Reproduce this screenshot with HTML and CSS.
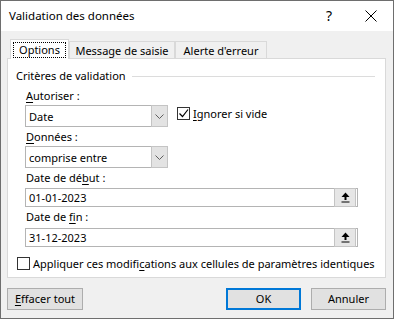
FILE: index.html
```html
<!DOCTYPE html>
<html lang="fr">
<head>
  <meta charset="UTF-8">
  <title>Validation des données</title>
  <link rel="stylesheet" href="styles.css">
</head>
<body>
  <div class="dialog">
    <div class="titlebar">
      <span class="title">Validation des données</span>
      <span class="help">?</span>
      <span class="close">
        <svg width="12" height="12" viewBox="0 0 12 12"><path d="M0.5 0.5 L11.5 11.5 M11.5 0.5 L0.5 11.5" stroke="#000" stroke-width="1" fill="none"/></svg>
      </span>
    </div>

    <div class="content">
      <div class="tabs">
        <div class="tab active"><span class="focus">Options</span></div>
        <div class="tab">Message de saisie</div>
        <div class="tab">Alerte d'erreur</div>
      </div>

      <div class="panel">
        <div class="group-title">Critères de validation<span class="rule"></span></div>

        <div class="fields">
          <div class="label"><u>A</u>utoriser :</div>
          <div class="row">
            <div class="select">
              <span class="value">Date</span>
              <span class="drop"><svg width="9" height="5" viewBox="0 0 9 5"><path d="M0.5 0.5 L4.5 4.5 L8.5 0.5" stroke="#5f5f5f" fill="none"/></svg></span>
            </div>
            <label class="check">
              <span class="box"><svg width="11" height="11" viewBox="0 0 11 11"><path d="M1.5 5.5 L4.5 8.5 L10 1.5" stroke="#000" stroke-width="1.2" fill="none"/></svg></span>
              <span><u>I</u>gnorer si vide</span>
            </label>
          </div>

          <div class="label second"><u>D</u>onnées :</div>
          <div class="select">
            <span class="value">comprise entre</span>
            <span class="drop"><svg width="9" height="5" viewBox="0 0 9 5"><path d="M0.5 0.5 L4.5 4.5 L8.5 0.5" stroke="#5f5f5f" fill="none"/></svg></span>
          </div>

          <div class="label second">Date de dé<u>b</u>ut :</div>
          <div class="input first">
            <span class="value">01-01-2023</span>
            <span class="ref"><svg width="9" height="11" viewBox="0 0 9 11"><path d="M4.5 0.5 L8.5 5 L0.5 5 Z" fill="#000"/><rect x="3.5" y="4.5" width="2" height="3.5" fill="#000"/><rect x="0.5" y="9.5" width="8" height="1" fill="#000"/></svg></span>
          </div>

          <div class="label third">Date de <u>f</u>in :</div>
          <div class="input last">
            <span class="value">31-12-2023</span>
            <span class="ref"><svg width="9" height="11" viewBox="0 0 9 11"><path d="M4.5 0.5 L8.5 5 L0.5 5 Z" fill="#000"/><rect x="3.5" y="4.5" width="2" height="3.5" fill="#000"/><rect x="0.5" y="9.5" width="8" height="1" fill="#000"/></svg></span>
          </div>
        </div>

        <label class="check apply">
          <span class="box"></span>
          <span>Appliquer ces modifi<u>c</u>ations aux cellules de paramètres identiques</span>
        </label>
      </div>

      <div class="buttons">
        <button class="btn clear"><u>E</u>ffacer tout</button>
        <button class="btn ok">OK</button>
        <button class="btn cancel">Annuler</button>
      </div>
    </div>
  </div>
</body>
</html>
```

FILE: styles.css
```css
html, body {
  margin: 0;
  padding: 0;
}
body {
  font-family: "Noto Sans", "Open Sans", sans-serif;
  font-size: 11px;
  color: #000;
}
u {
  text-decoration-thickness: 1px;
  text-underline-offset: 2px;
}
.dialog {
  width: 394px;
  height: 319px;
  box-sizing: border-box;
  border: 1px solid #6e6e6e;
  background: #f0f0f0;
  display: flex;
  flex-direction: column;
}
.titlebar {
  height: 30px;
  background: #fff;
  display: flex;
  align-items: center;
}
.title {
  flex: 1;
  margin-left: 8px;
  margin-top: -1px;
  font-size: 11.5px;
}
.help {
  font-size: 14px;
  margin-right: 33px;
  margin-top: -2px;
}
.close {
  display: flex;
  margin-right: 16px;
  margin-top: -1px;
}

.content {
  padding: 0 7px 0 6px;
}
.tabs {
  display: flex;
  align-items: flex-start;
  margin-top: 8px;
  padding-left: 3px;
  height: 19px;
}
.tab {
  box-sizing: border-box;
  height: 17px;
  margin-top: 2px;
  border: 1px solid #d9d9d9;
  border-bottom: none;
  background: #f0f0f0;
  display: flex;
  align-items: center;
  justify-content: center;
  line-height: 15px;
}
.tab.active {
  position: relative;
  z-index: 1;
  margin-top: 0;
  height: 20px;
  width: 59px;
  background: #fff;
  border-color: #d9d9d9;
}
.tab:nth-child(2) {
  width: 106px;
}
.tab:nth-child(3) {
  width: 92px;
}
.focus {
  border: 1px dotted #000;
  padding: 0 5px;
  line-height: 14px;
  margin-top: 1px;
}

.panel {
  box-sizing: border-box;
  height: 220px;
  background: #fff;
  border: 1px solid #d9d9d9;
  padding: 0 8px;
}
.group-title {
  display: flex;
  align-items: center;
  margin-top: 9px;
  height: 16px;
  line-height: 16px;
}
.rule {
  flex: 1;
  height: 1px;
  background: #dcdcdc;
  margin: 1px 2px 0 6px;
}
.fields {
  margin-left: 9px;
}
.label {
  height: 16px;
  line-height: 16px;
  margin-top: 4px;
  padding-left: 1px;
}
.label.second {
  margin-top: 2px;
}
.label.third {
  margin-top: 2px;
}
.row {
  display: flex;
  align-items: center;
}
.select {
  box-sizing: border-box;
  width: 143px;
  height: 22px;
  margin-top: 1px;
  border: 1px solid #b4b4b4;
  display: flex;
  align-items: center;
}
.value {
  flex: 1;
  padding-left: 3px;
}
.drop {
  box-sizing: border-box;
  align-self: stretch;
  width: 17px;
  margin: -1px -1px -1px 0;
  background: #e3e3e3;
  border: 1px solid #c4c4c4;
  display: flex;
  align-items: center;
  justify-content: center;
}
.check {
  display: flex;
  align-items: center;
  gap: 3px;
  white-space: nowrap;
}
.row .check {
  margin-left: 9px;
  margin-top: -4px;
}
.box {
  box-sizing: border-box;
  width: 13px;
  height: 13px;
  border: 1px solid #333;
  background: #fff;
  display: flex;
  align-items: center;
  justify-content: center;
}
.input {
  box-sizing: border-box;
  width: 333px;
  height: 19px;
  border: 1px solid #b4b4b4;
  display: flex;
  align-items: center;
}
.input.first {
  margin-top: 2px;
}
.input.last {
  margin-top: 3px;
}
.ref {
  box-sizing: border-box;
  width: 22px;
  height: 19px;
  margin: -1px 1px -1px 0;
  background: #e6e6e6;
  border: 1px solid #c4c4c4;
  display: flex;
  align-items: center;
  justify-content: center;
}
.apply {
  margin-top: 8px;
  margin-left: 1px;
  height: 16px;
}

.buttons {
  display: flex;
  margin-top: 10px;
}
.btn {
  box-sizing: border-box;
  height: 22px;
  width: 75px;
  font-family: "Noto Sans", "Open Sans", sans-serif;
  font-size: 11px;
  color: #000;
  background: #e1e1e1;
  border: 1px solid #adadad;
  padding: 0;
  line-height: 18px;
}
.btn.clear {
  width: 76px;
}
.btn.ok {
  margin-left: auto;
  border: 2px solid #0078d7;
}
.btn.cancel {
  margin-left: 10px;
}
```
